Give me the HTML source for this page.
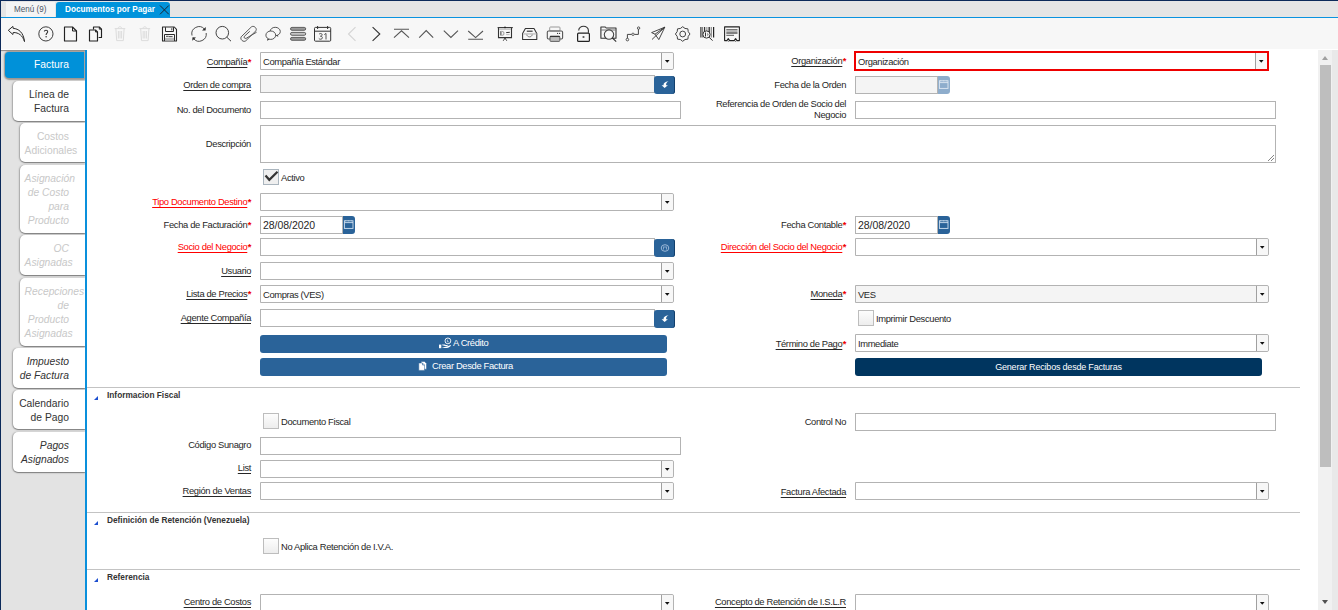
<!DOCTYPE html><html><head><meta charset="utf-8"><style>
*{margin:0;padding:0;box-sizing:border-box}
html,body{width:1338px;height:610px;overflow:hidden;background:#fff;font-family:"Liberation Sans",sans-serif;color:#333}
.a{position:absolute}
.lbl{position:absolute;font-size:9.4px;line-height:18px;height:18px;text-align:right;white-space:nowrap;letter-spacing:-0.35px;color:#262626}
.lbl u{text-decoration:underline;text-decoration-thickness:1px;text-underline-offset:1.6px}
.red{color:#f00}
.req::after{content:"*";color:#e00;font-size:9px}
.tb{position:absolute;border:1px solid #b3b3b3;background:#fff;height:18px}
.dis{background:#f4f4f4}
.val{position:absolute;left:2px;top:1px;font-size:9.4px;line-height:16px;letter-spacing:-0.38px;color:#262626;white-space:nowrap}
.dd{position:absolute;right:0;top:0;width:11px;height:16px;border-left:1px solid #b3b3b3;background:#f7f7f7;border-radius:0 2px 2px 0}
.dd::after{content:"";position:absolute;left:2.2px;top:6.5px;width:5.5px;height:3.2px;background:#111;clip-path:polygon(0 0,100% 0,50% 100%)}
.ddw{width:12px}.ddw::after{left:2.5px}
.dd{border-left-color:#a0a0a0}
.cb{border-radius:0 2px 2px 0}
.btn{position:absolute;background:#2a6399;border-radius:3px;color:#fff;font-size:9px;text-align:center;line-height:18px;letter-spacing:-0.2px;white-space:nowrap}
.chk{position:absolute;width:16px;height:16px;border:1px solid #aab5be;background:#efefef}
.cl{position:absolute;font-size:9.4px;line-height:16px;letter-spacing:-0.35px;white-space:nowrap;color:#262626}
.sep{position:absolute;left:87px;width:1213px;height:1px;background:#c3c3c3}
.sec{position:absolute;left:107px;font-size:8.3px;font-weight:bold;color:#333;line-height:12px;white-space:nowrap}
.tri{position:absolute;left:94px;width:0;height:0;border-left:4px solid transparent;border-bottom:4px solid #1c4fd0}
.ltab{position:absolute;right:1253px;background:#fff;border-radius:5px 0 0 5px;box-shadow:0 1px 1px #888, -1px 0 1px #bbb}
.ltab span{position:absolute;right:16px;text-align:right;font-size:10.3px;line-height:14px;white-space:nowrap}
.ic{position:absolute;top:26px}
</style></head><body>
<div class="a" style="left:0;top:0;width:1338px;height:1px;background:#0c2a5a"></div>
<div class="a" style="left:0;top:0;width:1px;height:610px;background:#0c2a5a"></div>
<div class="a" style="left:1px;top:1px;width:1337px;height:16px;background:#e5e5e5"></div>
<div class="a" style="left:6px;top:2px;width:49px;height:15px;background:#f4f4f4"></div>
<div class="a" style="left:14px;top:2px;height:15px;line-height:15px;font-size:8.7px;color:#4a5566;white-space:nowrap;transform:scaleX(0.93);transform-origin:0 0">Menú (9)</div>
<div class="a" style="left:56px;top:2px;width:114px;height:15px;background:#0093db;border-radius:3px 3px 0 0"></div>
<div class="a" style="left:64.5px;top:2px;height:15px;line-height:15px;font-size:8.8px;font-weight:bold;color:#fff;white-space:nowrap;transform:scaleX(0.93);transform-origin:0 0">Documentos por Pagar</div>
<svg class="a" style="left:159px;top:4px" width="11" height="11" viewBox="0 0 11 11"><path d="M1 1.5L9.8 10.3M9.8 1.5L1 10.3" stroke="#1a2535" stroke-width="1"/></svg>
<div class="a" style="left:1px;top:17px;width:1337px;height:1px;background:#0a93e0"></div>
<div class="a" style="left:1px;top:18px;width:1337px;height:31px;background:#f7f7f7"></div>
<div class="a" style="left:1px;top:50px;width:84px;height:560px;background:#e3e3e3;box-shadow:inset 0 2px 1px -1px #8d8884"></div>
<div class="a" style="left:5px;top:52px;width:79px;height:26px;background:#0091d9;border-radius:4px 0 0 4px;box-shadow:0 0.5px 1.5px 1px #9a9590"></div>
<div class="a" style="left:34px;top:52px;line-height:26px;font-size:10.3px;color:#fff">Factura</div>
<div class="a" style="left:13px;top:81px;width:72px;height:40px;background:#fff;border-radius:5px 0 0 5px;box-shadow:0 1px 1.2px #7a7a7a,-1px 0 1.5px #b0b0b0"></div>
<div class="a" style="left:17.6px;width:51.4px;top:87.0px;text-align:right;font-size:10.3px;line-height:14px;font-style:normal;color:#333;padding-top:1px"><div style="white-space:nowrap">Línea de</div><div style="white-space:nowrap">Factura</div></div>
<div class="a" style="left:20px;top:123px;width:65px;height:39px;background:#fff;border-radius:5px 0 0 5px;box-shadow:0 1px 1.2px #7a7a7a,-1px 0 1.5px #b0b0b0"></div>
<div class="a" style="left:24.6px;width:44.4px;top:128.5px;text-align:right;font-size:10.3px;line-height:14px;font-style:normal;color:#c8c8c8;padding-top:1px"><div style="white-space:nowrap">Costos</div><div style="white-space:nowrap">Adicionales</div></div>
<div class="a" style="left:20px;top:165px;width:65px;height:68px;background:#fff;border-radius:5px 0 0 5px;box-shadow:0 1px 1.2px #7a7a7a,-1px 0 1.5px #b0b0b0"></div>
<div class="a" style="left:24.6px;width:44.4px;top:171.0px;text-align:right;font-size:10.3px;line-height:14px;font-style:italic;color:#c8c8c8;padding-top:1px"><div style="white-space:nowrap">Asignación</div><div style="white-space:nowrap">de Costo</div><div style="white-space:nowrap">para</div><div style="white-space:nowrap">Producto</div></div>
<div class="a" style="left:20px;top:235px;width:65px;height:40px;background:#fff;border-radius:5px 0 0 5px;box-shadow:0 1px 1.2px #7a7a7a,-1px 0 1.5px #b0b0b0"></div>
<div class="a" style="left:24.6px;width:44.4px;top:241.0px;text-align:right;font-size:10.3px;line-height:14px;font-style:italic;color:#c8c8c8;padding-top:1px"><div style="white-space:nowrap">OC</div><div style="white-space:nowrap">Asignadas</div></div>
<div class="a" style="left:20px;top:278px;width:65px;height:68px;background:#fff;border-radius:5px 0 0 5px;box-shadow:0 1px 1.2px #7a7a7a,-1px 0 1.5px #b0b0b0"></div>
<div class="a" style="left:24.6px;width:44.4px;top:284.0px;text-align:right;font-size:10.3px;line-height:14px;font-style:italic;color:#c8c8c8;padding-top:1px"><div style="white-space:nowrap">Recepciones</div><div style="white-space:nowrap">de</div><div style="white-space:nowrap">Producto</div><div style="white-space:nowrap">Asignadas</div></div>
<div class="a" style="left:13px;top:348px;width:72px;height:40px;background:#fff;border-radius:5px 0 0 5px;box-shadow:0 1px 1.2px #7a7a7a,-1px 0 1.5px #b0b0b0"></div>
<div class="a" style="left:17.6px;width:51.4px;top:354.0px;text-align:right;font-size:10.3px;line-height:14px;font-style:italic;color:#333;padding-top:1px"><div style="white-space:nowrap">Impuesto</div><div style="white-space:nowrap">de Factura</div></div>
<div class="a" style="left:13px;top:390px;width:72px;height:39px;background:#fff;border-radius:5px 0 0 5px;box-shadow:0 1px 1.2px #7a7a7a,-1px 0 1.5px #b0b0b0"></div>
<div class="a" style="left:17.6px;width:51.4px;top:395.5px;text-align:right;font-size:10.3px;line-height:14px;font-style:normal;color:#333;padding-top:1px"><div style="white-space:nowrap">Calendario</div><div style="white-space:nowrap">de Pago</div></div>
<div class="a" style="left:13px;top:432px;width:72px;height:40px;background:#fff;border-radius:5px 0 0 5px;box-shadow:0 1px 1.2px #7a7a7a,-1px 0 1.5px #b0b0b0"></div>
<div class="a" style="left:17.6px;width:51.4px;top:438.0px;text-align:right;font-size:10.3px;line-height:14px;font-style:italic;color:#333;padding-top:1px"><div style="white-space:nowrap">Pagos</div><div style="white-space:nowrap">Asignados</div></div>
<div class="a" style="left:85px;top:50px;width:2px;height:560px;background:#0a90dc"></div>
<div class="a" style="left:1318px;top:50px;width:14px;height:560px;background:#f1f1f1"></div>
<div class="a" style="left:1332px;top:50px;width:6px;height:560px;background:#e9e9e9"></div>
<div class="a" style="left:1320px;top:65px;width:11px;height:402px;background:#bebebe"></div>
<div class="a" style="left:1322px;top:56px;border-left:3.5px solid transparent;border-right:3.5px solid transparent;border-bottom:4px solid #a0a0a0"></div>
<div class="a" style="left:1322px;top:600px;border-left:3.5px solid transparent;border-right:3.5px solid transparent;border-top:4px solid #505050"></div>
<div class="lbl" style="left:0;width:251px;top:52.74px;line-height:18px;height:18px"><u>Compañía</u><span style="color:#e00;font-weight:bold;margin-left:0.4px">*</span></div>
<div class="tb cb" style="left:260px;top:52px;width:414px"><span class="val">Compañía Estándar</span><div class="dd ddw"></div></div>
<div class="lbl" style="left:0;width:251px;top:75.74px;line-height:18px;height:18px"><u>Orden de compra</u></div>
<div class="tb dis" style="left:260px;top:75px;width:395px"></div>
<div class="btn" style="left:654px;top:76px;width:21px;height:18px;box-shadow:inset -1px 0 0 #123f6c"></div>
<svg class="a" style="left:0;top:0" width="700" height="400" viewBox="0 0 700 400"><path d="M668.6 81.3 C665 81.6 663.2 83.4 663.7 85.2 L661.6 85.2 L664.6 88.1 L667.9 85.2 L666.1 85.2 C665.9 83.6 666.6 82.2 668.6 81.3 Z" fill="#fff"/></svg>
<div class="lbl" style="left:0;width:251px;top:100.74px;line-height:18px;height:18px">No. del Documento</div>
<div class="tb" style="left:260px;top:101px;width:421px;height:18px"></div>
<div class="lbl" style="left:0;width:251px;top:134.64px;line-height:18px;height:18px">Descripción</div>
<div class="tb" style="left:260px;top:125px;width:1016px;height:38px"></div>
<svg class="a" style="left:1267px;top:154px" width="8" height="8" viewBox="0 0 8 8"><path d="M7 1L1 7M7 4L4 7" stroke="#666" stroke-width="0.8"/></svg>
<div class="chk" style="left:263px;top:169px;"></div>
<svg class="a" style="left:263px;top:169px" width="16" height="16" viewBox="0 0 16 16"><path d="M2.5 6.5 L6.3 10.8 L14.5 2.8" fill="none" stroke="#333" stroke-width="2.2"/></svg>
<div class="cl" style="left:281px;top:170px">Activo</div>
<div class="lbl red" style="left:0;width:251px;top:193.44px;line-height:18px;height:18px"><u>Tipo Documento Destino</u><span style="color:#e00;font-weight:bold;margin-left:0.4px">*</span></div>
<div class="tb cb" style="left:260px;top:193px;width:414px"><div class="dd ddw"></div></div>
<div class="lbl" style="left:0;width:251px;top:215.74px;line-height:18px;height:18px">Fecha de Facturación<span style="color:#e00;font-weight:bold;margin-left:0.4px">*</span></div>
<div class="tb" style="left:260px;top:216px;width:83px"><span class="val" style="font-size:10.5px;letter-spacing:-0.05px;left:2px;top:0">28/08/2020</span></div>
<div class="a" style="left:343px;top:216px;width:12px;height:18px;background:#2a6399;border-radius:0 3px 3px 0"></div>
<svg class="a" style="left:343px;top:216px" width="12" height="18" viewBox="0 0 12 18"><rect x="1.4" y="4.8" width="8.6" height="7.6" fill="none" stroke="#cfe0f0" stroke-width="0.9"/><path d="M1.4 6.6 H10" stroke="#cfe0f0" stroke-width="0.9"/><path d="M2.6 4.5 v0.8 M5.7 4.5 v0.8 M8.8 4.5 v0.8" stroke="#cfe0f0" stroke-width="0.8"/></svg>
<div class="lbl red" style="left:0;width:251px;top:238.04px;line-height:18px;height:18px"><u>Socio del Negocio</u><span style="color:#e00;font-weight:bold;margin-left:0.4px">*</span></div>
<div class="tb" style="left:260px;top:238px;width:395px"></div>
<div class="btn" style="left:654px;top:239px;width:21px;height:18px;box-shadow:inset -1px 0 0 #123f6c"></div>
<svg class="a" style="left:660px;top:243px" width="10" height="10" viewBox="0 0 10 10"><ellipse cx="5" cy="5" rx="3.8" ry="3.3" fill="none" stroke="#9bb8d8" stroke-width="1"/><path d="M3.5 3.5v3M6.5 3.5v3M4 4h2" stroke="#9bb8d8" stroke-width="0.8"/></svg>
<div class="lbl" style="left:0;width:251px;top:262.44px;line-height:18px;height:18px"><u>Usuario</u></div>
<div class="tb cb" style="left:260px;top:262px;width:414px"><div class="dd ddw"></div></div>
<div class="lbl" style="left:0;width:251px;top:285.34px;line-height:18px;height:18px"><u>Lista de Precios</u><span style="color:#e00;font-weight:bold;margin-left:0.4px">*</span></div>
<div class="tb cb" style="left:260px;top:285px;width:414px"><span class="val">Compras (VES)</span><div class="dd ddw"></div></div>
<div class="lbl" style="left:0;width:251px;top:308.94px;line-height:18px;height:18px"><u>Agente Compañía</u></div>
<div class="tb" style="left:260px;top:309px;width:395px"></div>
<div class="btn" style="left:654px;top:310px;width:21px;height:18px;box-shadow:inset -1px 0 0 #123f6c"></div>
<svg class="a" style="left:0;top:0" width="700" height="400" viewBox="0 0 700 400"><path d="M668.6 315.3 C665 315.6 663.2 317.4 663.7 319.2 L661.6 319.2 L664.6 322.1 L667.9 319.2 L666.1 319.2 C665.9 317.6 666.6 316.2 668.6 315.3 Z" fill="#fff"/></svg>
<div class="btn" style="left:260px;top:335px;width:407px;height:18px"></div>
<div class="a" style="left:453px;top:335px;line-height:16px;font-size:9.4px;letter-spacing:-0.35px;color:#fff;white-space:nowrap">A Crédito</div>
<svg class="a" style="left:438px;top:337px" width="14" height="13" viewBox="0 0 14 13"><circle cx="9.9" cy="3.9" r="2.9" fill="none" stroke="#fff" stroke-width="0.9"/><path d="M9.4 2.6 V4.8 H10.8" fill="none" stroke="#fff" stroke-width="0.6"/><rect x="1" y="7.6" width="2.3" height="3.6" fill="#fff"/><path d="M3.6 8 C5 7.4 6.5 7.4 7.8 8 H9.6 C10 8.3 9.8 8.9 9.3 8.9 H7 M9.5 9.2 L12.6 8 C13 8.2 13 8.6 12.7 8.9 C11 10.4 9 11.2 6.8 11.1 L3.6 10.7 Z" fill="#fff"/></svg>
<div class="btn" style="left:260px;top:358px;width:407px;height:18px"></div>
<div class="a" style="left:432px;top:358px;line-height:16px;font-size:9.4px;letter-spacing:-0.35px;color:#fff;white-space:nowrap">Crear Desde Factura</div>
<svg class="a" style="left:418px;top:361px" width="9" height="11" viewBox="0 0 9 11"><path d="M3.2 0.5h3.3l2 2V8.2H3.2z" fill="#fff" stroke="#2a6399" stroke-width="0.5"/><path d="M0.8 2h3.7l2 2V9.4H0.8z" fill="#fff" stroke="#2a6399" stroke-width="0.5"/><path d="M4.5 2 V4 H6.5" fill="none" stroke="#2a6399" stroke-width="0.6"/></svg>
<div class="a" style="left:854px;top:51px;width:415px;height:20px;border:2px solid #ee0000;background:#fff"></div>
<div class="a" style="left:856px;top:53px;width:411px;height:16px"><span class="val" style="left:2px">Organización</span><div class="dd ddw" style="height:16px;border-radius:0"></div></div>
<div class="lbl" style="left:0;width:846px;top:52.34px;line-height:18px;height:18px"><u>Organización</u><span style="color:#e00;font-weight:bold;margin-left:0.4px">*</span></div>
<div class="lbl" style="left:0;width:846px;top:76.04px;line-height:18px;height:18px">Fecha de la Orden</div>
<div class="tb dis" style="left:855px;top:76px;width:83px"></div>
<div class="a" style="left:938px;top:76px;width:12px;height:18px;background:#8eadcc;border-radius:0 3px 3px 0"></div>
<svg class="a" style="left:938px;top:76px" width="12" height="18" viewBox="0 0 12 18"><rect x="1.4" y="4.8" width="8.6" height="7.6" fill="none" stroke="#dfe8f2" stroke-width="0.9"/><path d="M1.4 6.6 H10" stroke="#dfe8f2" stroke-width="0.9"/><path d="M2.6 4.5 v0.8 M5.7 4.5 v0.8 M8.8 4.5 v0.8" stroke="#dfe8f2" stroke-width="0.8"/></svg>
<div class="lbl" style="left:0;width:846px;top:99px;line-height:10.7px;height:22px">Referencia de Orden de Socio del<br>Negocio</div>
<div class="tb" style="left:855px;top:101px;width:421px;height:18px"></div>
<div class="lbl" style="left:0;width:846px;top:215.84px;line-height:18px;height:18px">Fecha Contable<span style="color:#e00;font-weight:bold;margin-left:0.4px">*</span></div>
<div class="tb" style="left:855px;top:216px;width:83px"><span class="val" style="font-size:10.5px;letter-spacing:-0.05px;left:2px;top:0">28/08/2020</span></div>
<div class="a" style="left:938px;top:216px;width:12px;height:18px;background:#2a6399;border-radius:0 3px 3px 0"></div>
<svg class="a" style="left:938px;top:216px" width="12" height="18" viewBox="0 0 12 18"><rect x="1.4" y="4.8" width="8.6" height="7.6" fill="none" stroke="#cfe0f0" stroke-width="0.9"/><path d="M1.4 6.6 H10" stroke="#cfe0f0" stroke-width="0.9"/><path d="M2.6 4.5 v0.8 M5.7 4.5 v0.8 M8.8 4.5 v0.8" stroke="#cfe0f0" stroke-width="0.8"/></svg>
<div class="lbl red" style="left:0;width:846px;top:238.44px;line-height:18px;height:18px"><u>Dirección del Socio del Negocio</u><span style="color:#e00;font-weight:bold;margin-left:0.4px">*</span></div>
<div class="tb cb" style="left:855px;top:238px;width:414px"><div class="dd ddw"></div></div>
<div class="lbl" style="left:0;width:846px;top:285.34px;line-height:18px;height:18px"><u>Moneda</u><span style="color:#e00;font-weight:bold;margin-left:0.4px">*</span></div>
<div class="tb cb dis" style="left:855px;top:285px;width:414px"><span class="val">VES</span><div class="dd ddw"></div></div>
<div class="chk" style="left:858px;top:310px;background:linear-gradient(#fdfdfd,#ededed);border-color:#bdbdbd"></div>
<div class="cl" style="left:876px;top:311px">Imprimir Descuento</div>
<div class="lbl" style="left:0;width:846px;top:334.74px;line-height:18px;height:18px"><u>Término de Pago</u><span style="color:#e00;font-weight:bold;margin-left:0.4px">*</span></div>
<div class="tb cb" style="left:855px;top:334px;width:414px"><span class="val">Immediate</span><div class="dd ddw"></div></div>
<div class="btn" style="left:855px;top:358px;width:407px;height:18px;background:#00355f">Generar Recibos desde Facturas</div>
<div class="sep" style="top:387px"></div>
<div class="tri" style="top:396px"></div>
<div class="sec" style="top:389px">Informacion Fiscal</div>
<div class="chk" style="left:263px;top:413px;background:linear-gradient(#fdfdfd,#ededed);border-color:#bdbdbd"></div>
<div class="cl" style="left:281px;top:414px">Documento Fiscal</div>
<div class="lbl" style="left:0;width:846px;top:412.54px;line-height:18px;height:18px">Control No</div>
<div class="tb" style="left:855px;top:413px;width:421px;height:18px"></div>
<div class="lbl" style="left:0;width:251px;top:436.34px;line-height:18px;height:18px">Código Sunagro</div>
<div class="tb" style="left:260px;top:437px;width:421px;height:18px"></div>
<div class="lbl" style="left:0;width:251px;top:459.04px;line-height:18px;height:18px"><u>List</u></div>
<div class="tb cb" style="left:260px;top:460px;width:414px"><div class="dd ddw"></div></div>
<div class="lbl" style="left:0;width:251px;top:482.04px;line-height:18px;height:18px"><u>Región de Ventas</u></div>
<div class="tb cb" style="left:260px;top:482px;width:414px"><div class="dd ddw"></div></div>
<div class="lbl" style="left:0;width:846px;top:482.54px;line-height:18px;height:18px"><u>Factura Afectada</u></div>
<div class="tb cb" style="left:855px;top:482px;width:414px"><div class="dd ddw"></div></div>
<div class="sep" style="top:512px"></div>
<div class="tri" style="top:521px"></div>
<div class="sec" style="top:514px">Definición de Retención (Venezuela)</div>
<div class="chk" style="left:263px;top:538px;background:linear-gradient(#fdfdfd,#ededed);border-color:#bdbdbd"></div>
<div class="cl" style="left:281px;top:539px">No Aplica Retención de I.V.A.</div>
<div class="sep" style="top:569px"></div>
<div class="tri" style="top:578px"></div>
<div class="sec" style="top:571px">Referencia</div>
<div class="lbl" style="left:0;width:251px;top:592.94px;line-height:18px;height:18px"><u>Centro de Costos</u></div>
<div class="tb cb" style="left:260px;top:594px;width:414px"><div class="dd ddw"></div></div>
<div class="lbl" style="left:0;width:846px;top:592.94px;line-height:18px;height:18px"><u>Concepto de Retención de I.S.L.R</u></div>
<div class="tb cb" style="left:855px;top:594px;width:414px"><div class="dd ddw"></div></div>
<svg class="a" style="left:0;top:0" width="760" height="50" viewBox="0 0 760 50"><path d="M8.3 30.3 L12.9 26.4 L13.2 28.4 C18.5 28.6 23.6 32.5 24.5 41.6 C22.8 35.6 18.6 32.4 13.2 32.5 L12.9 34.5 Z" fill="none" stroke="#2b2b2b" stroke-width="1" stroke-linejoin="round"/><circle cx="45.9" cy="33.9" r="7.1" fill="none" stroke="#333" stroke-width="0.95"/><path d="M44.3 31.5 C44.4 29.9 47.7 29.9 47.7 31.6 C47.7 33 46.1 33.1 46.1 34.9" fill="none" stroke="#333" stroke-width="1.05"/><circle cx="46.1" cy="36.7" r="0.75" fill="#333"/><path d="M64.5 27 H72.5 L76.5 31 V41 H64.5 Z" fill="none" stroke="#222" stroke-width="1.15" stroke-linejoin="round"/><path d="M72.5 27 V31 H76.5" fill="none" stroke="#222" stroke-width="1"/><path d="M93.5 29.6 V27 H99.3 L101.5 29.2 V37.5 H98.6" fill="none" stroke="#222" stroke-width="1.15" stroke-linejoin="round"/><path d="M99.3 27 V29.2 H101.5" fill="none" stroke="#222" stroke-width="0.9"/><path d="M89.5 30 H95.5 L97.5 32 V41 H89.5 Z" fill="none" stroke="#222" stroke-width="1.15" stroke-linejoin="round"/><path d="M95.5 30 V32 H97.5" fill="none" stroke="#222" stroke-width="0.9"/><path d="M114.7 28.6 H125.3 M118.2 28.4 C118.2 26.2 121.7 26.2 121.7 28.4 M115.9 28.8 L116.7 40.6 H123.3 L124.10000000000001 28.8 M118.4 31 V38.5 M120.0 31 V38.5 M121.60000000000001 31 V38.5" fill="none" stroke="#dcdcdc" stroke-width="1"/><path d="M139.5 28.6 H150.1 M143.0 28.4 C143.0 26.2 146.5 26.2 146.5 28.4 M140.7 28.8 L141.5 40.6 H148.1 L148.9 28.8 M143.2 31 V38.5 M144.8 31 V38.5 M146.4 31 V38.5" fill="none" stroke="#dcdcdc" stroke-width="1"/><path d="M162.5 27 H174.3 L176.5 29.4 V41 H162.5 Z" fill="none" stroke="#2a2a2a" stroke-width="1.1" stroke-linejoin="round"/><path d="M165.5 27.2 V31.5 H173.5 V27.2" fill="none" stroke="#2a2a2a" stroke-width="1"/><path d="M171.8 28.2 V30.4" stroke="#2a2a2a" stroke-width="0.9"/><path d="M164.5 41 V34.5 H174.5 V41" fill="none" stroke="#2a2a2a" stroke-width="1"/><rect x="165" y="37.8" width="9" height="2.8" fill="#b8b8b8"/><path d="M166 36.3 H168.6 M168.8 36.6 H172.6" stroke="#333" stroke-width="0.9"/><path d="M192 35.5 A7.2 7.2 0 0 1 204.5 29.2" fill="none" stroke="#444" stroke-width="0.95"/><path d="M205.8 27 L205.6 30.6 L202 30.4 Z" fill="#2b2b2b"/><path d="M206.2 33 A7.2 7.2 0 0 1 193.6 38.7" fill="none" stroke="#444" stroke-width="0.95"/><path d="M192.3 40.8 L192.5 37.2 L196 37.5 Z" fill="#2b2b2b"/><circle cx="222.3" cy="32.7" r="6.3" fill="none" stroke="#3a3a3a" stroke-width="0.95"/><path d="M226.8 37.2 L231 41.2" stroke="#3a3a3a" stroke-width="1"/><path d="M256.1 30.6 L245.8 40.8 C243.6 42.6 239.6 39.6 241.2 36.8 L251.4 26.9 C253.4 25.2 257.2 27.8 256.1 30.6 M249.8 31.3 L244.4 36.3 C243.4 37.4 244.8 39 246.2 38.3 L256.6 32.2" fill="none" stroke="#505050" stroke-width="0.95"/><ellipse cx="275.2" cy="31.5" rx="5.1" ry="4.2" fill="none" stroke="#444" stroke-width="0.9"/><ellipse cx="270.8" cy="35.2" rx="4.9" ry="4.2" fill="#f7f7f7" stroke="#444" stroke-width="0.9"/><path d="M267.5 38.8 L267 40.7 L269.5 39.4 Z M277.8 35 L278.3 36.8 L276.6 36 Z" fill="#333"/><rect x="290.5" y="27.400000000000002" width="15.2" height="2.9" rx="1.45" fill="#9a9a9a" stroke="#4a4a4a" stroke-width="0.85"/><rect x="290.5" y="32.4" width="15.2" height="2.9" rx="1.45" fill="#c4c4c4" stroke="#4a4a4a" stroke-width="0.85"/><rect x="290.5" y="37.4" width="15.2" height="2.9" rx="1.45" fill="#9a9a9a" stroke="#4a4a4a" stroke-width="0.85"/><rect x="314.5" y="27.4" width="16.2" height="13.8" rx="1" fill="none" stroke="#333" stroke-width="1"/><path d="M314.5 31.2 H330.7 M317.6 26 V29 M327.6 26 V29" stroke="#333" stroke-width="1"/><path d="M319 34.3 C319.5 33.2 322.2 33.2 322.2 34.8 C322.2 35.9 321.2 36.1 320.4 36.2 C321.4 36.2 322.4 36.6 322.4 37.8 C322.4 39.6 319.4 39.6 318.8 38.4 M324.3 34.6 L326 33.4 V39.5" fill="none" stroke="#555" stroke-width="1"/><path d="M355.5 27.2 L348.5 34 L355.5 40.8" fill="none" stroke="#d4d4d4" stroke-width="1.1"/><path d="M372.6 27.2 L379.8 34 L372.6 40.8" fill="none" stroke="#333" stroke-width="1.1"/><path d="M394 29.2 H409 M394 37.6 L401.5 30.8 L409 37.6" fill="none" stroke="#555" stroke-width="1.1"/><path d="M419.2 37.6 L426.2 30.6 L433.2 37.6" fill="none" stroke="#555" stroke-width="1.1"/><path d="M443.8 30.6 L450.9 37.4 L458 30.6" fill="none" stroke="#555" stroke-width="1.1"/><path d="M468.2 31 L475.6 37.6 L483 31 M468.2 39.2 H483" fill="none" stroke="#555" stroke-width="1.1"/><path d="M497.6 27.6 H512.8" stroke="#333" stroke-width="1.1"/><circle cx="505" cy="27.4" r="0.9" fill="#222"/><path d="M498.5 28 V37.6 H511.5 V28" fill="none" stroke="#333" stroke-width="1.1"/><rect x="499" y="28.6" width="12" height="1.3" fill="#c4c4c4"/><path d="M500.9 31.2 V35.5" stroke="#333" stroke-width="1"/><path d="M501.4 31.2 C504.8 31.2 504.8 35.5 501.4 35.5" fill="none" stroke="#aaa" stroke-width="1.1"/><path d="M506.2 32.6 L509.8 32.3" stroke="#333" stroke-width="1"/><path d="M506.2 34.6 H509.6" stroke="#bbb" stroke-width="1"/><path d="M503.2 40.8 L505 38.2 L506.8 40.8 M505 38 V39" fill="none" stroke="#333" stroke-width="0.9"/><path d="M525.4 28.4 H534 L536.8 33.6 V39.5 H522.6 V33.6 Z" fill="none" stroke="#333" stroke-width="1.05" stroke-linejoin="round"/><rect x="523" y="33.1" width="13.4" height="1.6" fill="#c8c8c8"/><path d="M526.8 34.6 C527.2 37.6 531.8 37.6 532.2 34.6" fill="none" stroke="#666" stroke-width="0.9"/><path d="M526.8 31.2 H532.6" stroke="#3a3a3a" stroke-width="1.2"/><rect x="549.7" y="27" width="10.3" height="4" rx="0.8" fill="none" stroke="#999" stroke-width="1"/><rect x="547.3" y="31" width="15.3" height="8" rx="1.2" fill="none" stroke="#555" stroke-width="1.1"/><rect x="550" y="36.2" width="9.8" height="5.2" rx="0.8" fill="#bdbdbd" stroke="#555" stroke-width="0.9"/><path d="M550 36.5 H559.8" stroke="#333" stroke-width="1.1"/><circle cx="557.6" cy="33.4" r="0.6" fill="#333"/><circle cx="559.6" cy="33.4" r="0.6" fill="#333"/><path d="M578.7 30.6 C578.6 24.8 588.5 24.8 588.4 30.6 V32.8" fill="none" stroke="#333" stroke-width="1.1"/><rect x="577.6" y="33.2" width="11.8" height="8.2" rx="1" fill="none" stroke="#222" stroke-width="1.2"/><circle cx="583.5" cy="37" r="1.1" fill="#555"/><path d="M600.9 38.2 V27 H605.3 L606.2 28 H616 V38.2 Z" fill="none" stroke="#333" stroke-width="1.1" stroke-linejoin="round"/><path d="M601 30 H616" stroke="#777" stroke-width="1"/><circle cx="609" cy="34.6" r="4.7" fill="#f7f7f7" stroke="#444" stroke-width="1.1"/><path d="M612.4 38 L616.2 41.6" stroke="#333" stroke-width="1.1"/><path d="M627.4 38.8 V34.4 H638.4 V29" fill="none" stroke="#444" stroke-width="1"/><circle cx="627.4" cy="39.6" r="1.3" fill="#f7f7f7" stroke="#444" stroke-width="0.9"/><circle cx="633" cy="34.3" r="1.2" fill="#f7f7f7" stroke="#555" stroke-width="0.9"/><circle cx="638.6" cy="28.1" r="1.2" fill="#f7f7f7" stroke="#444" stroke-width="0.9"/><path d="M664.8 27.2 L651.6 32.6 L655 34.2 L658.8 39.6 Z M664.8 27.2 L655 34.2 M664.8 27.2 L652 39.5" fill="none" stroke="#333" stroke-width="0.9" stroke-linejoin="round"/><path d="M690.00 34.00 L688.24 36.30 L687.86 39.16 L685.00 39.54 L682.70 41.30 L680.40 39.54 L677.54 39.16 L677.16 36.30 L675.40 34.00 L677.16 31.70 L677.54 28.84 L680.40 28.46 L682.70 26.70 L685.00 28.46 L687.86 28.84 L688.24 31.70 Z" fill="none" stroke="#444" stroke-width="1" stroke-linejoin="round"/><circle cx="682.7" cy="34" r="2.9" fill="none" stroke="#444" stroke-width="1"/><rect x="700.3" y="27" width="1.2" height="10.5" fill="#333"/><rect x="702.3" y="27" width="0.8" height="10.5" fill="#555"/><rect x="704" y="27" width="1.2" height="10.5" fill="#333"/><rect x="706.5" y="27" width="0.8" height="10.5" fill="#666"/><rect x="708.5" y="27" width="1.4" height="10.5" fill="#333"/><rect x="710.8" y="27" width="0.8" height="10.5" fill="#555"/><rect x="713" y="27" width="1.2" height="10.5" fill="#222"/><circle cx="706.5" cy="34.5" r="3.6" fill="#f7f7f7" stroke="#333" stroke-width="1"/><rect x="705" y="32.5" width="1" height="4" fill="#333"/><path d="M707.2 32.8 L708.8 34.5 L707.2 36.2 Z" fill="#888"/><path d="M709.2 37.4 L712.6 40.6" stroke="#333" stroke-width="1"/><path d="M724.6 40.6 V26.9 H739.4 V40.6 H737 L735.6 38.6 L734.2 40.6 H729.6 L728.3 38.6 L726.9 40.6 Z" fill="none" stroke="#222" stroke-width="1.1" stroke-linejoin="round"/><rect x="726.3" y="29.2" width="11.2" height="1.1" fill="#555"/><rect x="726.3" y="30.7" width="11.2" height="1" fill="#999"/><rect x="726.3" y="32.4" width="11.2" height="1.2" fill="#333"/><path d="M726.3 35.3 H734" stroke="#444" stroke-width="0.9"/><circle cx="728.3" cy="41.2" r="0.5" fill="#444"/><circle cx="735.6" cy="41.2" r="0.5" fill="#444"/></svg>
</body></html>
